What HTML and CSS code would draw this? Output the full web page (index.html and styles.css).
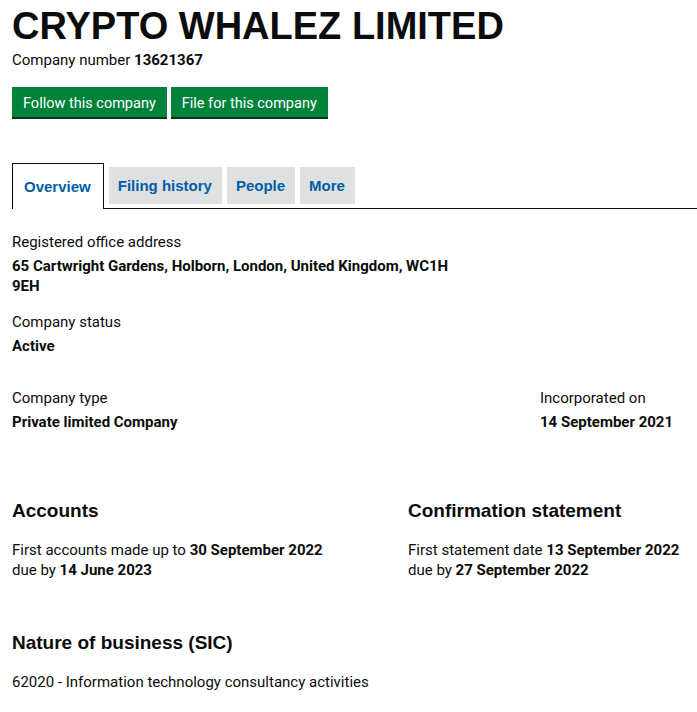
FILE: index.html
```html
<!DOCTYPE html>
<html lang="en">
<head>
    <meta charset="UTF-8">
    <meta name="viewport" content="width=device-width, initial-scale=1.0">
    <title>CRYPTO WHALEZ LIMITED overview</title>
    <link rel="stylesheet" href="styles.css">
</head>
<body>
    <div class="page">
        <h1 class="company-name">CRYPTO WHALEZ LIMITED</h1>
        <p class="company-number">Company number <strong>13621367</strong></p>

        <div class="actions">
            <a class="button" href="#">Follow this company</a>
            <a class="button" href="#">File for this company</a>
        </div>

        <ul class="tabs">
            <li class="tab active"><a href="#">Overview</a></li>
            <li class="tab"><a href="#">Filing history</a></li>
            <li class="tab"><a href="#">People</a></li>
            <li class="tab"><a href="#">More</a></li>
        </ul>

        <dl class="detail address">
            <dt>Registered office address</dt>
            <dd>65 Cartwright Gardens, Holborn, London, United Kingdom, WC1H 9EH</dd>
        </dl>

        <dl class="detail">
            <dt>Company status</dt>
            <dd>Active</dd>
        </dl>

        <div class="row type-row">
            <dl class="detail">
                <dt>Company type</dt>
                <dd>Private limited Company</dd>
            </dl>
            <dl class="detail">
                <dt>Incorporated on</dt>
                <dd>14 September 2021</dd>
            </dl>
        </div>

        <div class="row filings">
            <div class="column">
                <h2>Accounts</h2>
                <p>First accounts made up to <strong>30 September 2022</strong><br>
                due by <strong>14 June 2023</strong></p>
            </div>
            <div class="column">
                <h2>Confirmation statement</h2>
                <p>First statement date <strong>13 September 2022</strong><br>
                due by <strong>27 September 2022</strong></p>
            </div>
        </div>

        <h2>Nature of business (SIC)</h2>
        <ul class="sic">
            <li>62020 - Information technology consultancy activities</li>
        </ul>
    </div>
</body>
</html>
```

FILE: styles.css
```css
body {
    margin: 0;
    padding: 0;
    background-color: #fff;
    color: #0b0c0c;
    font-family: Roboto, "Noto Sans", sans-serif;
    font-size: 15px;
    line-height: 20px;
}

.page {
    padding: 0 0 0 12px;
}

.company-name {
    font-family: "Liberation Sans", Arial, sans-serif;
    font-size: 38px;
    line-height: 40px;
    font-weight: bold;
    margin: 6px 0 0;
}

.company-number {
    margin: 4px 0 0;
}

.actions {
    display: flex;
    gap: 4px;
    margin-top: 17px;
}

.button {
    display: inline-block;
    background-color: #00823b;
    color: #fff;
    text-decoration: none;
    font-size: 14.5px;
    padding: 7px 11px 3px;
    box-shadow: 0 2px 0 #003618;
    line-height: 20px;
}

.tabs {
    display: flex;
    align-items: flex-end;
    list-style: none;
    margin: 46px 0 0;
    padding: 0;
    border-bottom: 1px solid #0b0c0c;
    gap: 5px;
}

.tab a {
    display: block;
    font-family: "Liberation Sans", Arial, sans-serif;
    font-weight: bold;
    font-size: 15px;
    line-height: 20px;
    color: #005ea5;
    text-decoration: none;
    background-color: #dee0e2;
    padding: 9px 10px 8px 9px;
    margin-bottom: 4px;
}

.tab.active a {
    background-color: #fff;
    border: 1px solid #0b0c0c;
    border-bottom: none;
    padding: 13px 12px 12px 11px;
    margin-bottom: -1px;
}

.detail {
    margin: 0;
}

.detail dd {
    margin: 4px 0 0;
    font-weight: bold;
}

.address {
    margin-top: 23px;
    max-width: 460px;
}

.address + .detail {
    margin-top: 16px;
}

.row {
    display: flex;
}

.type-row {
    display: grid;
    grid-template-columns: 528px auto;
    margin-top: 32px;
}

.filings {
    margin-top: 67px;
}

.filings .column:first-child {
    width: 396px;
}

h2 {
    font-family: "Liberation Sans", Arial, sans-serif;
    font-size: 19px;
    line-height: 24px;
    font-weight: bold;
    margin: 0;
}

.filings p {
    margin: 17px 0 0;
}

.filings + h2 {
    margin-top: 51px;
}

.sic {
    list-style: none;
    margin: 17px 0 0;
    padding: 0;
}
```
